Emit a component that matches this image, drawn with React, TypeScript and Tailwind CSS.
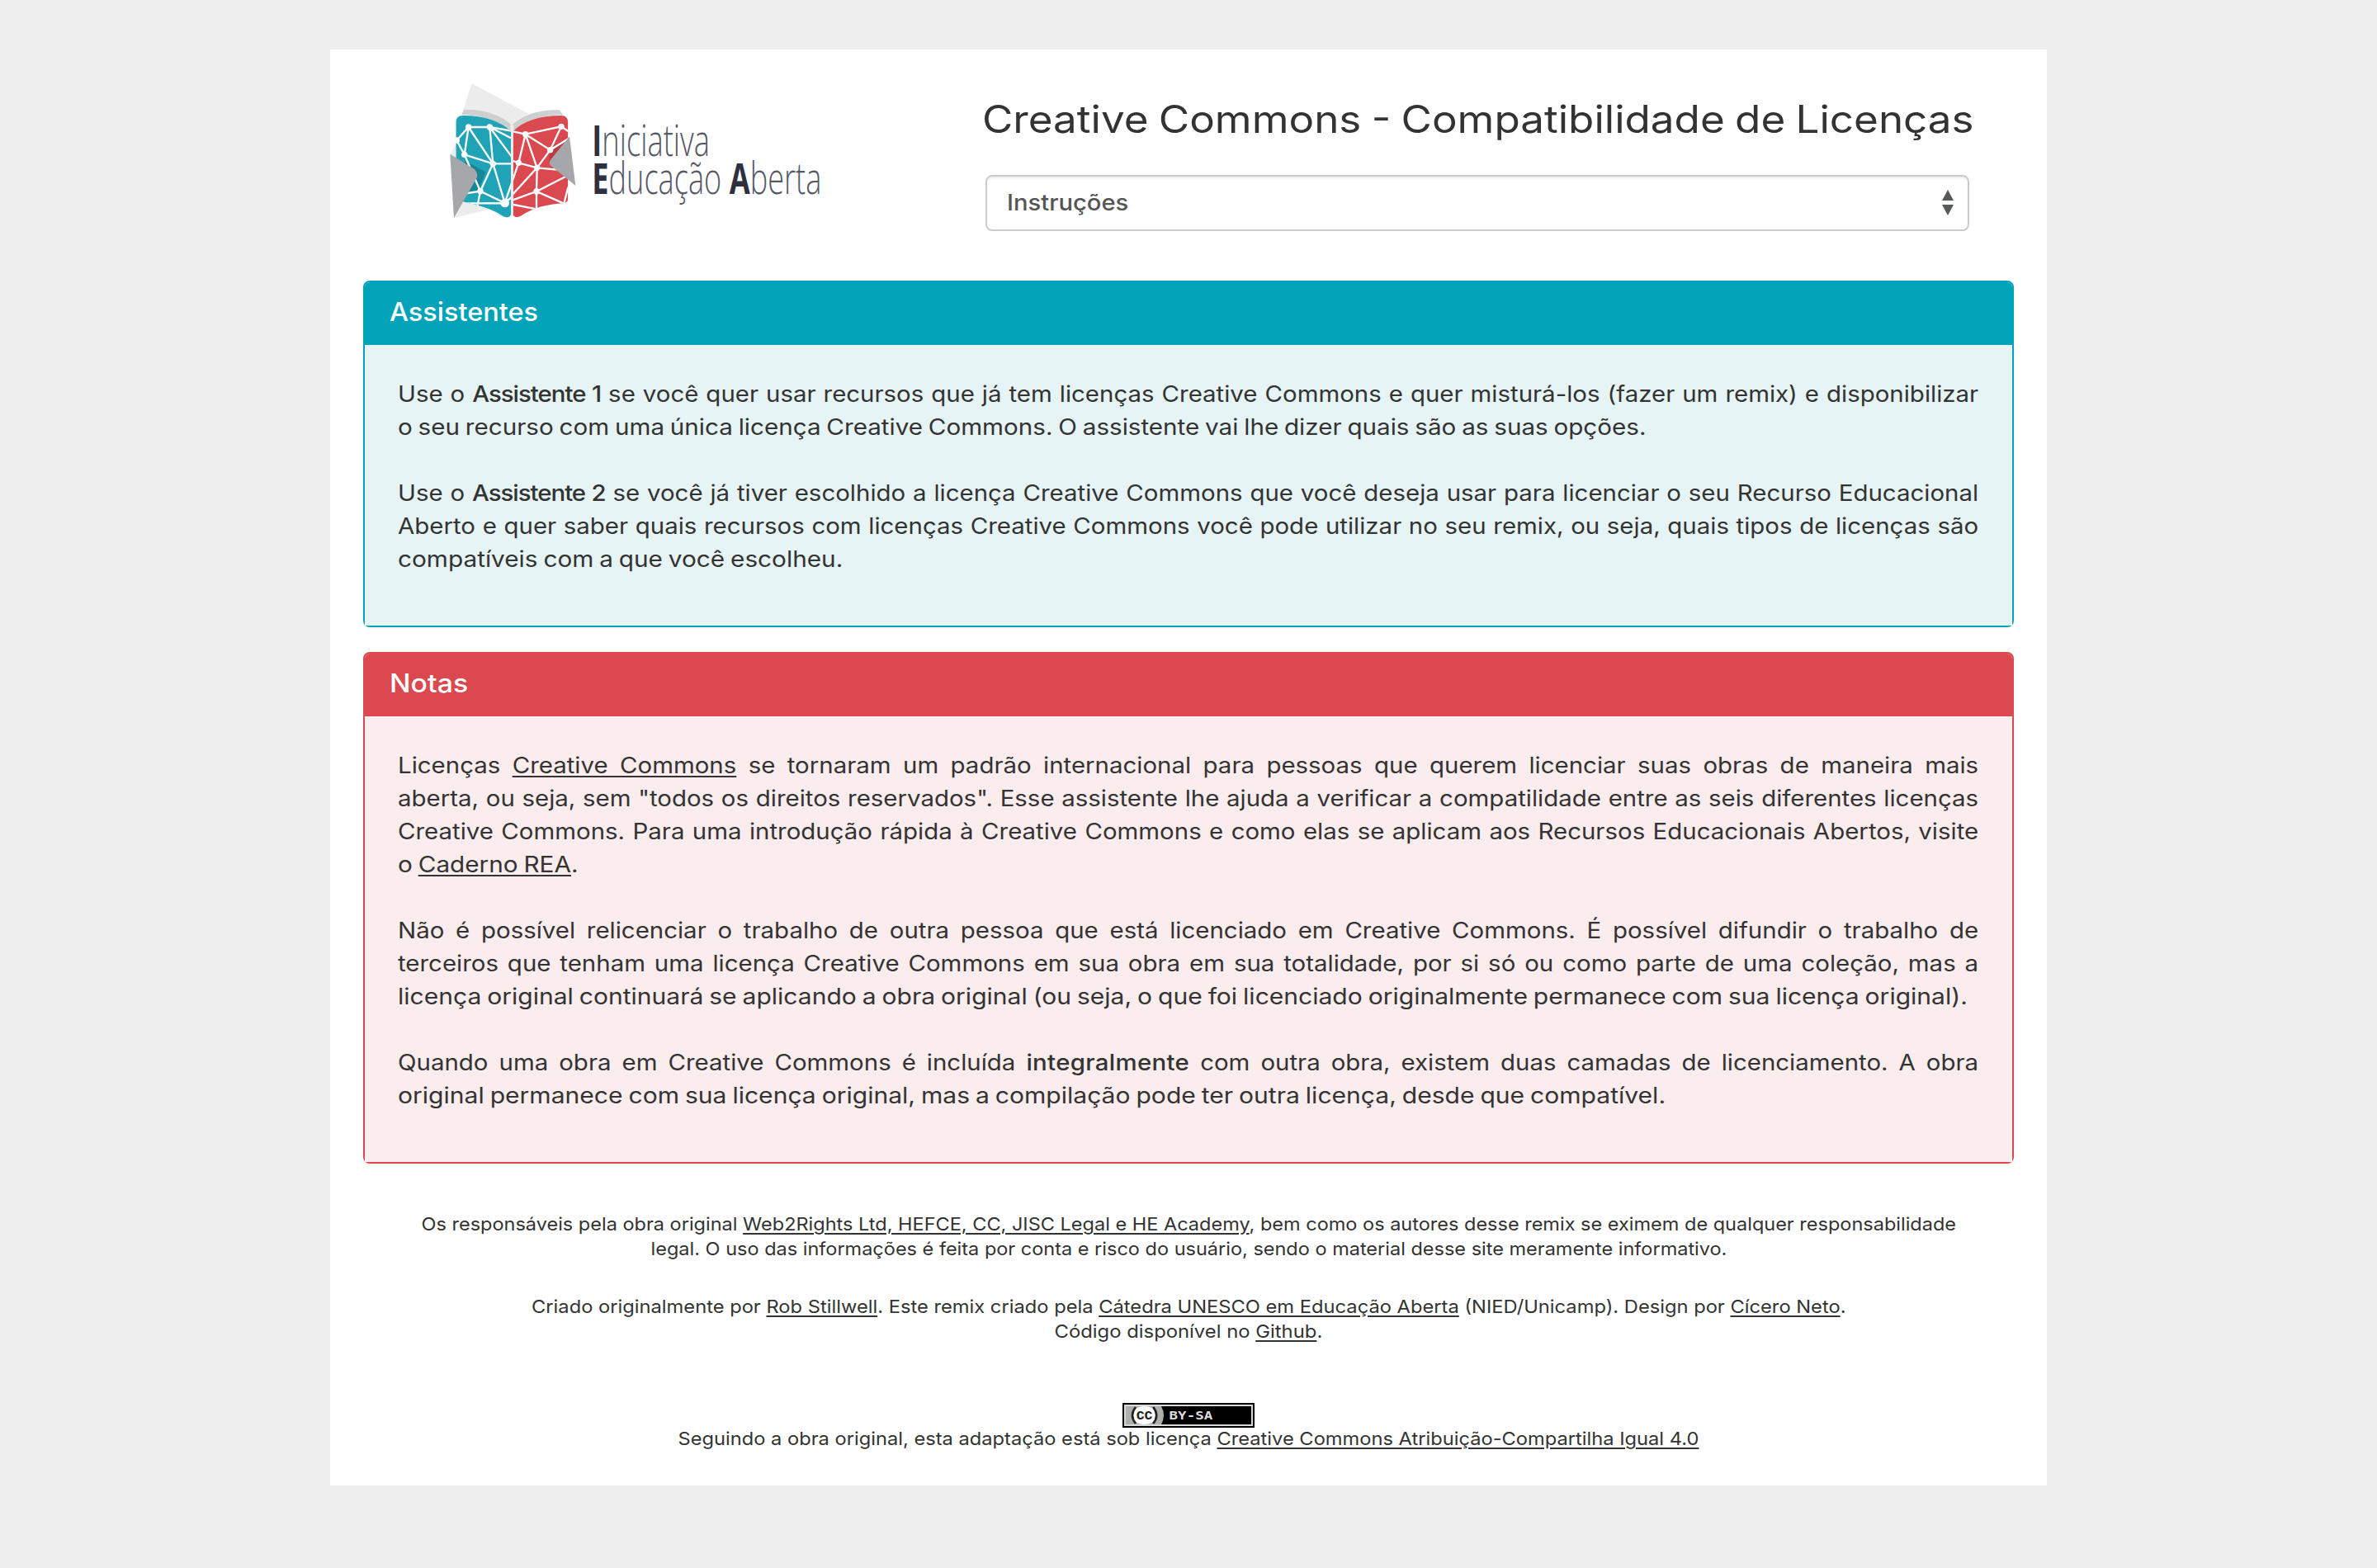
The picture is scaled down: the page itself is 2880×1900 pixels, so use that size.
import { useLayoutEffect, useRef, useState } from 'react'
import type { ReactNode } from 'react'

/** A single line of copy whose glyphs are stretched to reach a given measure. */
function Fit({ w, center = false, children }: { w: number; center?: boolean; children: ReactNode }) {
  const ref = useRef<HTMLSpanElement>(null)
  const [scale, setScale] = useState(1)
  useLayoutEffect(() => {
    if (ref.current) setScale(w / ref.current.offsetWidth)
  }, [w])
  return (
    <span
      ref={ref}
      className={`inline-block whitespace-pre ${center ? 'origin-center' : 'origin-left'}`}
      style={{ transform: `scaleX(${scale})` }}
    >
      {children}
    </span>
  )
}

function Full({ children }: { children: ReactNode }) {
  return (
    <span className="block w-[1757px] origin-left scale-x-[1.09] whitespace-nowrap text-justify [text-align-last:justify]">
      {children}
    </span>
  )
}

function Line({ w, center = false, children }: { w: number; center?: boolean; children: ReactNode }) {
  return (
    <span className="block">
      <Fit w={w} center={center}>
        {children}
      </Fit>
    </span>
  )
}

function A({ children }: { children: ReactNode }) {
  return (
    <a href="#" className="underline decoration-2 underline-offset-[3px]">
      {children}
    </a>
  )
}

function B({ children }: { children: ReactNode }) {
  return <strong className="font-medium tracking-[-0.035em]">{children}</strong>
}

function Logo() {
  return (
    <svg viewBox="0 0 1500 600" className="h-[200px] w-[500px] overflow-visible" role="img" aria-label="Iniciativa Educação Aberta">
      <defs>
        <clipPath id="left">
          <path d="M97 205Q97 180 124 180C200 180 260 200 297 238V540Q290 556 270 547C240 527 215 518 180 508L120 492L97 330Z" />
        </clipPath>
        <clipPath id="right">
          <path d="M305 238C340 200 400 180 480 180Q505 180 505 208V480Q505 497 485 499C420 503 370 520 333 545Q312 556 305 540Z" />
        </clipPath>
      </defs>
      <path d="M155 64L362 174C335 185 312 200 298 222C265 190 190 165 118 178Z" fill="#ececec" />
      <path d="M97 280L76 325L90 552L215 522L120 490Z" fill="#ececec" />
      <path d="M118 178L126 160C190 155 265 178 300 216C335 178 400 158 474 160L486 178C410 178 340 200 307 240H295C260 200 190 178 118 178Z" fill="#cecfd0" />
      <path d="M295 215H307V545H295Z" fill="#ececec" />
      <g clipPath="url(#left)">
        <path d="M80 160H297V560H80Z" fill="#20a3b6" />
        <path d="M130 345L205 385L180 450L120 470Z" fill="#168596" />
        <g fill="none" stroke="#fff" strokeWidth="7">
          <path d="M100 270L143 222L220 222L300 236M143 222L128 322L100 270M143 222L232 355L220 222L300 330M220 222L297 262M128 322L232 355H310M128 322L186 455L232 355L275 498L186 455L175 510M186 455L120 465M275 498L325 352M120 500L275 498L330 450" />
        </g>
      </g>
      <g clipPath="url(#right)">
        <path d="M305 160H520V560H305Z" fill="#da4850" />
        <path d="M440 300L505 262V400L436 352Z" fill="#b83a42" />
        <g fill="none" stroke="#fff" strokeWidth="7">
          <path d="M305 238L350 248L480 220L510 240M350 248L325 352L305 345M350 248L440 305L480 220M350 248L392 370L440 305L510 262M325 352L392 370L500 380M392 370L390 456L500 400M392 370L275 498L325 352M275 498L390 456L490 500M390 456V530M275 498L390 520M490 500L505 440" />
        </g>
      </g>
      <g fill="#fff">
        {[
          [143, 222], [220, 222], [100, 270], [128, 322], [232, 355], [186, 455], [350, 248],
          [480, 220], [440, 305], [325, 352], [392, 370], [390, 456],
        ].map(([x, y]) => (
          <circle key={`${x}-${y}`} cx={x} cy={y} r="11" />
        ))}
        <circle cx="275" cy="498" r="16" />
      </g>
      <path d="M76 320L165 375Q182 395 170 412L90 552Z" fill="#a5a7aa" />
      <path d="M510 256L532 435L442 362Q432 352 442 340Z" fill="#a5a7aa" />
      <g fill="#565965" fontFamily="'Open Sans', 'Noto Sans', sans-serif" fontWeight="300" fontSize="158">
        <text x="592" y="326" textLength="428" lengthAdjust="spacingAndGlyphs">
          <tspan fontWeight="700" fill="#2e303d">I</tspan>niciativa
        </text>
        <text x="592" y="466" textLength="834" lengthAdjust="spacingAndGlyphs">
          <tspan fontWeight="700" fill="#2e303d">E</tspan>ducação <tspan fontWeight="700" fill="#2e303d">A</tspan>berta
        </text>
      </g>
    </svg>
  )
}

function Badge() {
  return (
    <svg viewBox="0 0 80 15" className="h-[30px] w-[160px]" role="img" aria-label="CC BY-SA">
      <path d="M0 0H80V15H0Z" fill="#000" />
      <path d="M1 1H79V14H1Z" fill="#d8d8d8" />
      <path d="M2 2H78V13H2Z" fill="#000" />
      <path d="M2 2H23.500Q26.500 7.500 23.500 13H2Z" fill="#abb1aa" />
      <ellipse cx="13.300" cy="7.500" rx="7.500" ry="5.500" fill="#fff" />
      <path d="M8 2.500Q4 7.500 8 12.500M18.600 2.500Q22.600 7.500 18.600 12.500" fill="none" stroke="#222" strokeWidth="1.300" />
      <text x="8.400" y="10" textLength="9.800" lengthAdjust="spacingAndGlyphs" fill="#222" fontFamily="'Liberation Sans', sans-serif" fontWeight="700" fontSize="9">
        cc
      </text>
      <text x="28.300" y="10" textLength="26.300" lengthAdjust="spacingAndGlyphs" fill="#dcdcdc" fontFamily="'DejaVu Sans Mono', monospace" fontWeight="700" fontSize="7">
        BY-SA
      </text>
    </svg>
  )
}

export default function App() {
  return (
    <div className="h-[1900px] overflow-hidden bg-[#eeeeee] pt-[60px] font-['Inter',sans-serif] text-[#333333]">
      <main className="mx-auto h-[1740px] w-[2080px] bg-white px-10">
        <header className="flex h-[280px]">
          <div className="w-[750px] pt-5 pl-20">
            <Logo />
          </div>
          <div className="w-[1200px] pt-[58px]">
            <h1 className="text-[46px] leading-[52px] whitespace-nowrap [word-spacing:-0.04em]">
              <Fit w={1202}>Creative Commons - Compatibilidade de Licenças</Fit>
            </h1>
            <div className="mt-[42px] ml-1 flex h-[68px] w-[1192px] items-center justify-between rounded-lg border-2 border-[#cccccc] bg-white pr-[17px] pl-6 text-[27px] font-medium text-[#555555] shadow-[inset_0_2px_2px_rgba(0,0,0,0.075)]">
              <Fit w={147}>Instruções</Fit>
              <svg viewBox="0 0 14 32" className="h-8 w-3.5">
                <path d="M7 0L14 13H0ZM0 18H14L7 31Z" fill="#565a59" />
              </svg>
            </div>
          </div>
        </header>

        <section className="h-[420px] rounded-lg border-2 border-[#00a3b7] shadow-[0_2px_2px_rgba(0,0,0,0.05)]">
          <h2 className="flex h-[76px] items-center rounded-t-md bg-[#00a3b7] px-[30px] pb-[3px] text-[31px] font-medium text-white">
            <Fit w={180}>Assistentes</Fit>
          </h2>
          <div className="flex h-[340px] flex-col gap-10 bg-[#e6f4f6] p-10 text-[27px] leading-10 [word-spacing:-0.05em]">
            <p>
              <Full>Use o <B>Assistente 1</B> se você quer usar recursos que já tem licenças Creative Commons e quer misturá-los (fazer um remix) e disponibilizar</Full>
              <Line w={1513}>o seu recurso com uma única licença Creative Commons. O assistente vai lhe dizer quais são as suas opções.</Line>
            </p>
            <p>
              <Full>Use o <B>Assistente 2</B> se você já tiver escolhido a licença Creative Commons que você deseja usar para licenciar o seu Recurso Educacional</Full>
              <Full>Aberto e quer saber quais recursos com licenças Creative Commons você pode utilizar no seu remix, ou seja, quais tipos de licenças são</Full>
              <Line w={539}>compatíveis com a que você escolheu.</Line>
            </p>
          </div>
        </section>

        <section className="mt-[30px] h-[620px] rounded-lg border-2 border-[#db4850] shadow-[0_2px_2px_rgba(0,0,0,0.05)]">
          <h2 className="flex h-[76px] items-center rounded-t-md bg-[#db4850] px-[30px] pb-[3px] text-[31px] font-medium text-white">
            <Fit w={95}>Notas</Fit>
          </h2>
          <div className="flex h-[540px] flex-col gap-10 bg-[#fbeced] p-10 text-[27px] leading-10 [word-spacing:-0.05em]">
            <p>
              <Full>Licenças <A>Creative Commons</A> se tornaram um padrão internacional para pessoas que querem licenciar suas obras de maneira mais</Full>
              <Full>aberta, ou seja, sem "todos os direitos reservados". Esse assistente lhe ajuda a verificar a compatilidade entre as seis diferentes licenças</Full>
              <Full>Creative Commons. Para uma introdução rápida à Creative Commons e como elas se aplicam aos Recursos Educacionais Abertos, visite</Full>
              <Line w={219}>o <A>Caderno REA</A>.</Line>
            </p>
            <p>
              <Full>Não é possível relicenciar o trabalho de outra pessoa que está licenciado em Creative Commons. É possível difundir o trabalho de</Full>
              <Full>terceiros que tenham uma licença Creative Commons em sua obra em sua totalidade, por si só ou como parte de uma coleção, mas a</Full>
              <Line w={1902}>licença original continuará se aplicando a obra original (ou seja, o que foi licenciado originalmente permanece com sua licença original).</Line>
            </p>
            <p>
              <Full>Quando uma obra em Creative Commons é incluída <strong className="font-medium tracking-[0.01em]">integralmente</strong> com outra obra, existem duas camadas de licenciamento. A obra</Full>
              <Line w={1536}>original permanece com sua licença original, mas a compilação pode ter outra licença, desde que compatível.</Line>
            </p>
          </div>
        </section>

        <footer className="pt-[58px] text-center text-[22px] leading-[30px]">
          <p>
            <Line center w={1860}>Os responsáveis pela obra original <A>Web2Rights Ltd, HEFCE, CC, JISC Legal e HE Academy</A>, bem como os autores desse remix se eximem de qualquer responsabilidade</Line>
            <Line center w={1304}>legal. O uso das informações é feita por conta e risco do usuário, sendo o material desse site meramente informativo.</Line>
          </p>
          <p className="mt-10">
            <Line center w={1592}>Criado originalmente por <A>Rob Stillwell</A>. Este remix criado pela <A>Cátedra UNESCO em Educação Aberta</A> (NIED/Unicamp). Design por <A>Cícero Neto</A>.</Line>
            <Line center w={325}>Código disponível no <A>Github</A>.</Line>
          </p>
          <div className="mt-[72px] -mb-[2px] flex justify-center">
            <Badge />
          </div>
          <p>
            <Line center w={1237}>Seguindo a obra original, esta adaptação está sob licença <A>Creative Commons Atribuição-Compartilha Igual 4.0</A></Line>
          </p>
        </footer>
      </main>
    </div>
  )
}
